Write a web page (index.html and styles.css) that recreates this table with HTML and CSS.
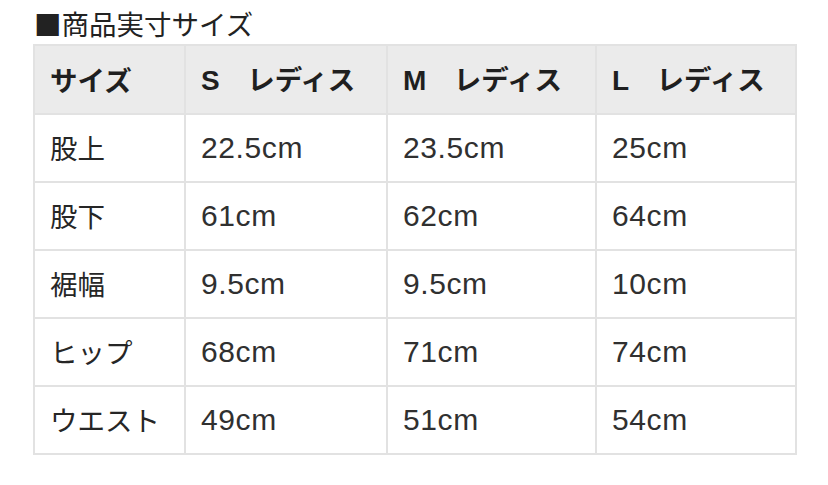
FILE: index.html
```html
<!DOCTYPE html>
<html lang="ja">
<head>
<meta charset="utf-8">
<link rel="stylesheet" href="styles.css">
</head>
<body>
<div class="page">
  <h2 class="title">■商品実寸サイズ</h2>
  <table class="size-table">
    <colgroup>
      <col class="c1"><col class="c2"><col class="c3"><col class="c4">
    </colgroup>
    <thead>
      <tr>
        <th>サイズ</th>
        <th><span class="lat">S</span>　レディス</th>
        <th><span class="lat">M</span>　レディス</th>
        <th><span class="lat">L</span>　レディス</th>
      </tr>
    </thead>
    <tbody>
      <tr><td>股上</td><td class="num">22.5cm</td><td class="num">23.5cm</td><td class="num">25cm</td></tr>
      <tr><td>股下</td><td class="num">61cm</td><td class="num">62cm</td><td class="num">64cm</td></tr>
      <tr><td>裾幅</td><td class="num">9.5cm</td><td class="num">9.5cm</td><td class="num">10cm</td></tr>
      <tr><td>ヒップ</td><td class="num">68cm</td><td class="num">71cm</td><td class="num">74cm</td></tr>
      <tr><td>ウエスト</td><td class="num">49cm</td><td class="num">51cm</td><td class="num">54cm</td></tr>
    </tbody>
  </table>
</div>
</body>
</html>
```
FILE: styles.css
```css
html, body {
  margin: 0;
  padding: 0;
  background: #ffffff;
}
body {
  font-family: "Noto Sans CJK JP", "Noto Sans", sans-serif;
  color: #262626;
}
.page {
  padding: 0 0 0 33px;
  width: 762px;
}
.title {
  margin: 0;
  height: 44px;
  display: flex;
  align-items: center;
  padding: 3px 0 0 1px;
  box-sizing: border-box;
  font-size: 27.5px;
  font-weight: 400;
  line-height: 1;
  color: #222;
}
.size-table {
  border-collapse: collapse;
  width: 762px;
  table-layout: fixed;
}
.c1 { width: 151px; }
.c2 { width: 202px; }
.c3 { width: 209px; }
.c4 { width: 200px; }
.size-table th,
.size-table td {
  border: 2px solid #e2e2e2;
  text-align: left;
  vertical-align: middle;
  padding: 0 0 0 15px;
  font-size: 27.5px;
  line-height: 1;
  white-space: nowrap;
}
.size-table th {
  height: 67px;
  background: #ebebeb;
  font-weight: 700;
  color: #1f1f1f;
}
.size-table td {
  height: 66px;
  font-weight: 400;
}
.lat {
  font-family: "Liberation Sans", Arial, sans-serif;
  font-size: 28px;
  font-weight: 700;
}
.size-table td.num {
  font-family: "Liberation Sans", Arial, sans-serif;
  font-size: 30px;
  letter-spacing: 0.6px;
  color: #303030;
}
```
